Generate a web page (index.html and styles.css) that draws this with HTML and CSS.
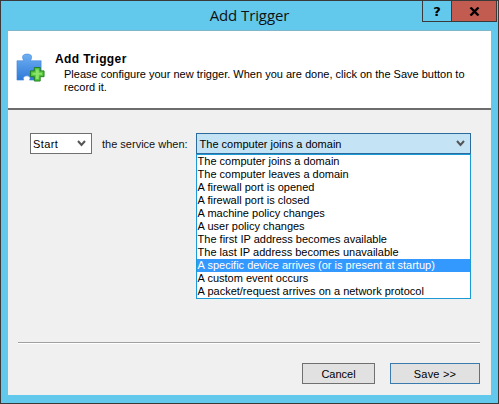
FILE: index.html
```html
<!DOCTYPE html>
<html lang="en">
<head>
<meta charset="utf-8">
<title>Add Trigger</title>
<link rel="stylesheet" href="styles.css">
</head>
<body>
<div class="window">
  <div class="titlebar">
    <div class="title">Add Trigger</div>
    <div class="caption">
      <div class="cap help">?</div>
      <div class="cap close">
        <svg width="11" height="9" viewBox="0 0 11 9"><path d="M1.5 .5 9.5 8.5M9.500 .5 1.500 8.500" stroke="#000" stroke-width="2.4" fill="none"/></svg>
      </div>
    </div>
  </div>
  <div class="client">
    <div class="header">
      <svg class="icon" width="29" height="29" viewBox="0 0 30 30">
        <defs><linearGradient id="pz" x1="0" y1="0" x2="0" y2="1"><stop offset="0" stop-color="#6fb0f2"/><stop offset="1" stop-color="#2f79d8"/></linearGradient></defs>
        <path d="M1 8H8C7 6 6.500 5 7 3 8 .5 15 .5 16 3 16.500 5 16 6 15 8H26V18H20V28H14C15 26 15 25 13 24 11 23 8 24 7.500 26L8 28H1Z" fill="url(#pz)" stroke="#3f86dc" stroke-width=".6"/>
        <path d="M19 15H25V18.500H29V24.500H25V29H19V24.500H15V18.500H19Z" fill="#55c43a" stroke="#1f7f1f" stroke-width="1"/>
        <path d="M20.500 17H23.500V20.500H27V22.500H23.500V27H20.500V22.500H17V20.500H20.500Z" fill="#8de46a"/>
      </svg>
      <div class="head-text">
        <div class="head-title">Add Trigger</div>
        <p class="head-desc">Please configure your new trigger. When you are done, click on the Save button to record it.</p>
      </div>
    </div>
    <div class="main">
      <div class="row">
        <div class="select start"><span>Start</span>
          <svg class="chev" width="9" height="7" viewBox="0 0 9 7"><path d="M1 1 4.500 5 8 1" stroke="#555" stroke-width="2" fill="none"/></svg>
        </div>
        <span class="label">the service when:</span>
        <div class="combo">
          <div class="select open"><span>The computer joins a domain</span>
            <svg class="chev" width="9" height="7" viewBox="0 0 9 7"><path d="M1 1 4.500 5 8 1" stroke="#555" stroke-width="2" fill="none"/></svg>
          </div>
          <ul class="list">
            <li>The computer joins a domain</li>
            <li>The computer leaves a domain</li>
            <li>A firewall port is opened</li>
            <li>A firewall port is closed</li>
            <li>A machine policy changes</li>
            <li>A user policy changes</li>
            <li>The first IP address becomes available</li>
            <li>The last IP address becomes unavailable</li>
            <li class="selected">A specific device arrives (or is present at startup)</li>
            <li>A custom event occurs</li>
            <li>A packet/request arrives on a network protocol</li>
          </ul>
        </div>
      </div>
    </div>
    <div class="footer">
      <div class="sep"></div>
      <div class="buttons">
        <button class="btn cancel">Cancel</button>
        <button class="btn save">Save &gt;&gt;</button>
      </div>
    </div>
  </div>
</div>
</body>
</html>
```
FILE: styles.css
```css
* { box-sizing: border-box; }
html, body { margin: 0; padding: 0; }
body { width: 499px; height: 404px; overflow: hidden; font-family: "Liberation Sans", sans-serif; font-size: 11px; color: #000; }
.window { width: 499px; height: 404px; background: #63c9ec; border: 1px solid #3a3a3a; display: flex; flex-direction: column; padding: 0 7px 8px 7px; }
.titlebar { height: 29px; position: relative; flex: none; display: flex; justify-content: center; }
.title { font-family: "Open Sans", sans-serif; font-size: 15px; line-height: 28px; color: #111; letter-spacing: -.1px; }
.caption { position: absolute; right: -6px; top: 0; display: flex; height: 21px; }
.cap { height: 21px; display: flex; align-items: center; justify-content: center; border: 1px solid #3a3a3a; border-top: 0; font-weight: bold; font-size: 14px; }
.help { width: 29px; border-right: 0; font-family: "DejaVu Sans", sans-serif; font-size: 13px; }
.close { width: 46px; background: #c25b50; }
.client { flex: 1; background: #f0f0f0; display: flex; flex-direction: column; border-top: 1px solid #7fb6cc; min-height: 0; }
.header { height: 79px; background: #fff; border-bottom: 2px solid #6d6d6d; display: flex; padding: 22px 0 0 8px; flex: none; }
.icon { flex: none; margin-right: 10px; }
.head-title { font-weight: bold; font-size: 12px; line-height: 14px; letter-spacing: .4px; margin-top: -1px; }
.head-desc { margin: 2px 0 0 9px; line-height: 13px; width: 412px; }
.main { flex: 1; padding: 23px 19px 0 22px; }
.row { display: flex; align-items: center; height: 21px; }
.select { height: 21px; display: flex; align-items: center; justify-content: space-between; padding: 0 5px 0 2px; border: 1px solid #707070; background: #fff; }
.start { width: 62px; letter-spacing: .4px; }
.label { margin: 0 8px 0 10px; color: #111; white-space: nowrap; }
.combo { width: 275px; position: relative; flex: none; }
.open { background: #c4e4f6; border: 1px solid #2b6c9c; }
.open span { padding-left: 1px; }
.list { position: absolute; left: 0; top: 21px; width: 275px; margin: 0; padding: 0; list-style: none; background: #fff; border: 1px solid #1c9ad6; z-index: 1; height: 145px; }
.list li { height: 13px; line-height: 13px; padding-left: 1px; white-space: nowrap; }
.list .selected { background: #3399ff; color: #fff; }
.footer { flex: none; padding: 0 11px 11px 10px; }
.sep { height: 2px; border-top: 1px solid #a0a0a0; border-bottom: 1px solid #fff; margin-bottom: 19px; }
.buttons { display: flex; justify-content: flex-end; gap: 15px; }
.btn { height: 21px; padding: 0; font-family: "Liberation Sans", sans-serif; font-size: 11px; background: #e1e1e1; border: 1px solid #707070; color: #000; }
.cancel { width: 73px; }
.save { width: 90px; border-color: #3a7aac; letter-spacing: .2px; }
```
